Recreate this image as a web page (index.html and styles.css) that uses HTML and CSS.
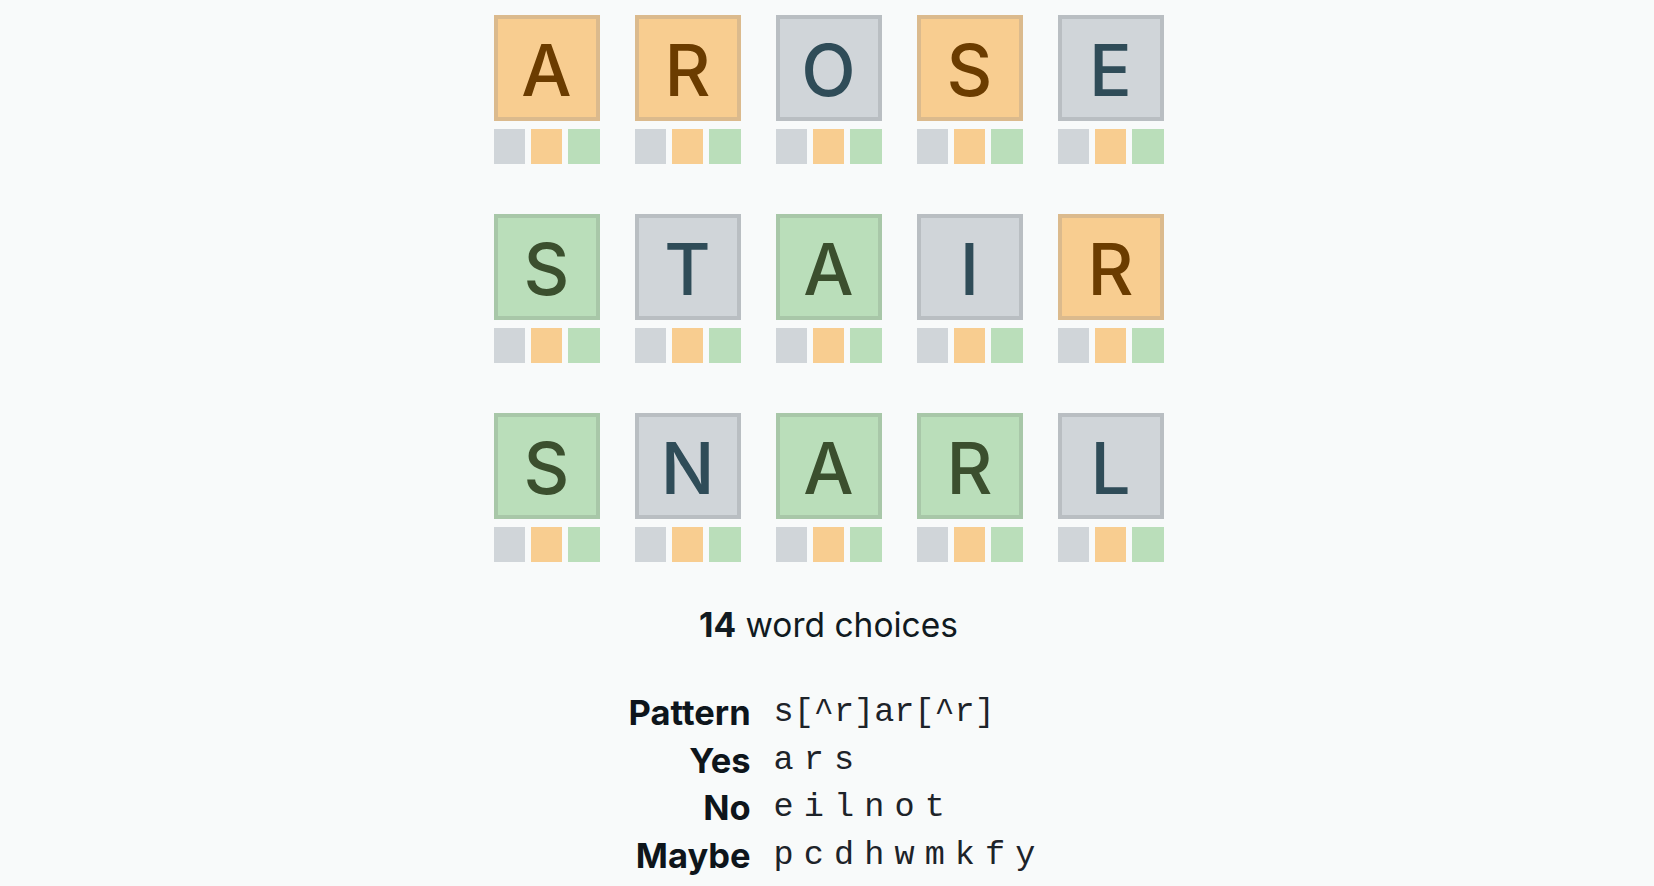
FILE: index.html
```html
<!DOCTYPE html>
<html lang="en">
<head>
<meta charset="utf-8">
<title>Wordle helper</title>
<link rel="stylesheet" href="styles.css">
</head>
<body>
<main class="page">
  <section class="board">
    <div class="cell"><div class="tile tile-maybe">A</div><div class="picks"><span class="pick p-no"></span><span class="pick p-maybe"></span><span class="pick p-yes"></span></div></div>
    <div class="cell"><div class="tile tile-maybe">R</div><div class="picks"><span class="pick p-no"></span><span class="pick p-maybe"></span><span class="pick p-yes"></span></div></div>
    <div class="cell"><div class="tile tile-no">O</div><div class="picks"><span class="pick p-no"></span><span class="pick p-maybe"></span><span class="pick p-yes"></span></div></div>
    <div class="cell"><div class="tile tile-maybe">S</div><div class="picks"><span class="pick p-no"></span><span class="pick p-maybe"></span><span class="pick p-yes"></span></div></div>
    <div class="cell"><div class="tile tile-no">E</div><div class="picks"><span class="pick p-no"></span><span class="pick p-maybe"></span><span class="pick p-yes"></span></div></div>

    <div class="cell"><div class="tile tile-yes">S</div><div class="picks"><span class="pick p-no"></span><span class="pick p-maybe"></span><span class="pick p-yes"></span></div></div>
    <div class="cell"><div class="tile tile-no">T</div><div class="picks"><span class="pick p-no"></span><span class="pick p-maybe"></span><span class="pick p-yes"></span></div></div>
    <div class="cell"><div class="tile tile-yes">A</div><div class="picks"><span class="pick p-no"></span><span class="pick p-maybe"></span><span class="pick p-yes"></span></div></div>
    <div class="cell"><div class="tile tile-no">I</div><div class="picks"><span class="pick p-no"></span><span class="pick p-maybe"></span><span class="pick p-yes"></span></div></div>
    <div class="cell"><div class="tile tile-maybe">R</div><div class="picks"><span class="pick p-no"></span><span class="pick p-maybe"></span><span class="pick p-yes"></span></div></div>

    <div class="cell"><div class="tile tile-yes">S</div><div class="picks"><span class="pick p-no"></span><span class="pick p-maybe"></span><span class="pick p-yes"></span></div></div>
    <div class="cell"><div class="tile tile-no">N</div><div class="picks"><span class="pick p-no"></span><span class="pick p-maybe"></span><span class="pick p-yes"></span></div></div>
    <div class="cell"><div class="tile tile-yes">A</div><div class="picks"><span class="pick p-no"></span><span class="pick p-maybe"></span><span class="pick p-yes"></span></div></div>
    <div class="cell"><div class="tile tile-yes">R</div><div class="picks"><span class="pick p-no"></span><span class="pick p-maybe"></span><span class="pick p-yes"></span></div></div>
    <div class="cell"><div class="tile tile-no">L</div><div class="picks"><span class="pick p-no"></span><span class="pick p-maybe"></span><span class="pick p-yes"></span></div></div>
  </section>

  <p class="count"><strong>14</strong> word choices</p>

  <dl class="summary">
    <dt>Pattern</dt><dd class="mono">s[^r]ar[^r]</dd>
    <dt>Yes</dt><dd class="mono spaced">a r s</dd>
    <dt>No</dt><dd class="mono spaced">e i l n o t</dd>
    <dt>Maybe</dt><dd class="mono spaced">p c d h w m k f y</dd>
  </dl>

  <section class="words"></section>
</main>
</body>
</html>
```

FILE: styles.css
```css
html, body {
  margin: 0;
  padding: 0;
}

body {
  background: #f8fafa;
  color: #111a21;
  font-family: Inter, "Noto Sans", "Liberation Sans", sans-serif;
}

.page {
  display: flex;
  flex-direction: column;
  align-items: center;
  padding-top: 15px;
}

.board {
  display: grid;
  grid-template-columns: repeat(5, 106px);
  column-gap: 35px;
  row-gap: 50px;
  margin-left: 3px;
}

.cell {
  display: flex;
  flex-direction: column;
  gap: 8px;
}

.tile {
  box-sizing: border-box;
  width: 106px;
  height: 106px;
  border: 4px solid;
  display: flex;
  align-items: center;
  justify-content: center;
  font-size: 71px;
  font-weight: 500;
  line-height: 1;
  padding-top: 4px;
}

.tile-maybe {
  background: #f8cd90;
  border-color: #dbba8d;
  color: #6b3c00;
}

.tile-no {
  background: #d0d5d9;
  border-color: #b9bec2;
  color: #2f4c58;
}

.tile-yes {
  background: #badeba;
  border-color: #a8c7a8;
  color: #3b4f2e;
}

.picks {
  display: grid;
  grid-template-columns: repeat(3, 1fr);
  gap: 6px;
  height: 35px;
}

.pick {
  display: block;
}

.p-no { background: #d0d5d9; }
.p-maybe { background: #f8cd90; }
.p-yes { background: #badeba; }

.count {
  margin: 39px 0 0 3px;
  font-size: 33.5px;
  line-height: 48px;
}

.count strong {
  font-weight: 700;
}

.summary {
  display: grid;
  grid-template-columns: auto auto;
  column-gap: 23px;
  row-gap: 0;
  margin: 40px 0 0 10px;
  line-height: 47.5px;
}

.summary dt {
  text-align: right;
  font-weight: 700;
  font-size: 34.5px;
  color: #0e151b;
}

.summary dd {
  margin: 0;
}

.mono {
  font-family: "Liberation Mono", "DejaVu Sans Mono", monospace;
  font-size: 33.5px;
  color: #1d2329;
}

.spaced {
  word-spacing: -10px;
}

.words {
  width: 1622px;
  height: 200px;
  margin-top: 14px;
  border-top: 1px solid #edefef;
  background: #f7f9f9;
}
```
